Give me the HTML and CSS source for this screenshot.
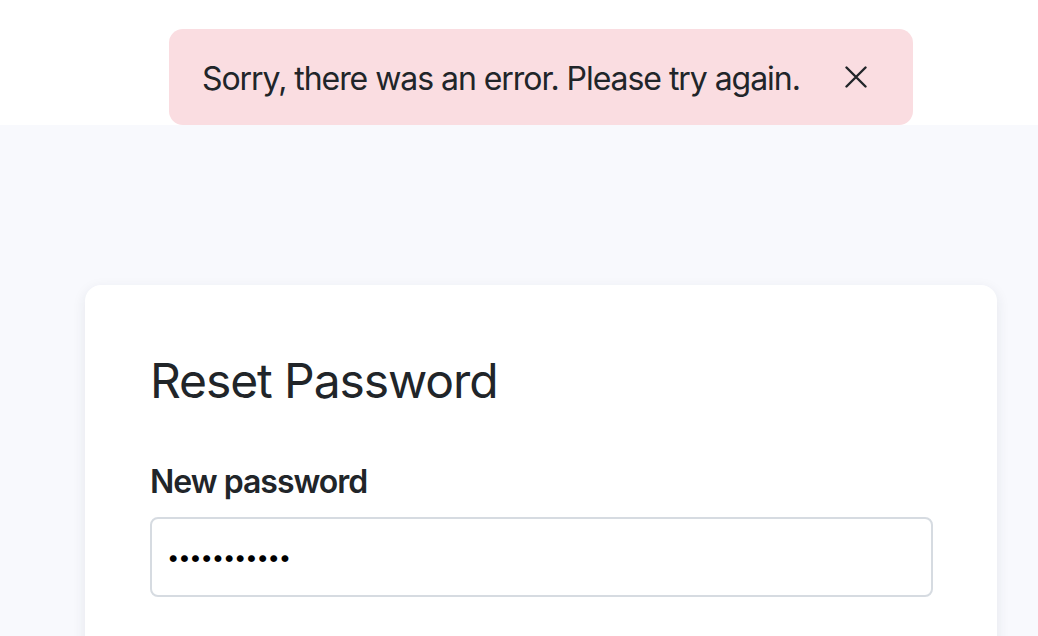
FILE: index.html
```html
<!DOCTYPE html>
<html lang="en">
<head>
<meta charset="utf-8">
<title>Reset Password</title>
<link rel="stylesheet" href="styles.css">
</head>
<body>
<header class="topbar"></header>
<div class="toast" role="alert">
  <span class="toast-text">Sorry, there was an error. Please try again.</span>
  <button class="toast-close" aria-label="Close">
    <svg viewBox="0 0 22 22" width="22" height="22"><path d="M1.5 1.5 L20.5 20.5 M20.5 1.5 L1.5 20.5" stroke="#212529" stroke-width="2.4" stroke-linecap="round" fill="none"/></svg>
  </button>
</div>
<main class="main">
  <section class="card">
    <h1 class="title">Reset Password</h1>
    <label class="label" for="pw">New password</label>
    <input class="input" id="pw" type="password" value="abcdefghijk">
  </section>
</main>
</body>
</html>
```
FILE: styles.css
```css
html, body { margin: 0; padding: 0; height: 100%; }
body {
  font-family: Inter, "Noto Sans", sans-serif;
  color: #212529;
  background: #f8f9fd;
  overflow: hidden;
}
.topbar { height: 125px; background: #ffffff; }
.toast {
  position: absolute;
  top: 29px;
  left: 169px;
  width: 744px;
  height: 96px;
  box-sizing: border-box;
  background: #fadde1;
  border-radius: 14px;
  display: flex;
  align-items: center;
  padding: 0 32px 0 33px;
}
.toast-text { font-size: 32px; flex: 1; letter-spacing: -1.05px; padding-top: 2px; }
.toast-close {
  background: none; border: 0; padding: 0; margin: 0 14px 0 0;
  width: 22px; height: 22px; display: flex; cursor: pointer;
}
.main { padding: 160px 41px 0 85px; }
.card {
  background: #ffffff;
  border-radius: 16px;
  box-shadow: 0 4px 14px rgba(30, 40, 70, 0.09);
  padding: 67px 64px 0 65px;
  height: 400px;
  box-sizing: border-box;
}
.title {
  margin: 0 0 53px;
  font-size: 48px;
  font-weight: 400;
  line-height: 1.2;
  letter-spacing: -1.1px;
}
.label {
  display: block;
  font-size: 32px;
  font-weight: 600;
  line-height: 1.2;
  margin-bottom: 16px;
  letter-spacing: -1px;
}
.input {
  display: block;
  width: 100%;
  height: 80px;
  box-sizing: border-box;
  border: 2px solid #d6dbe1;
  border-radius: 8px;
  padding: 0 15px;
  font-family: Inter, sans-serif;
  font-size: 22px;
  letter-spacing: -1.2px;
  color: #000;
  background: #fff;
  outline: none;
}
```
